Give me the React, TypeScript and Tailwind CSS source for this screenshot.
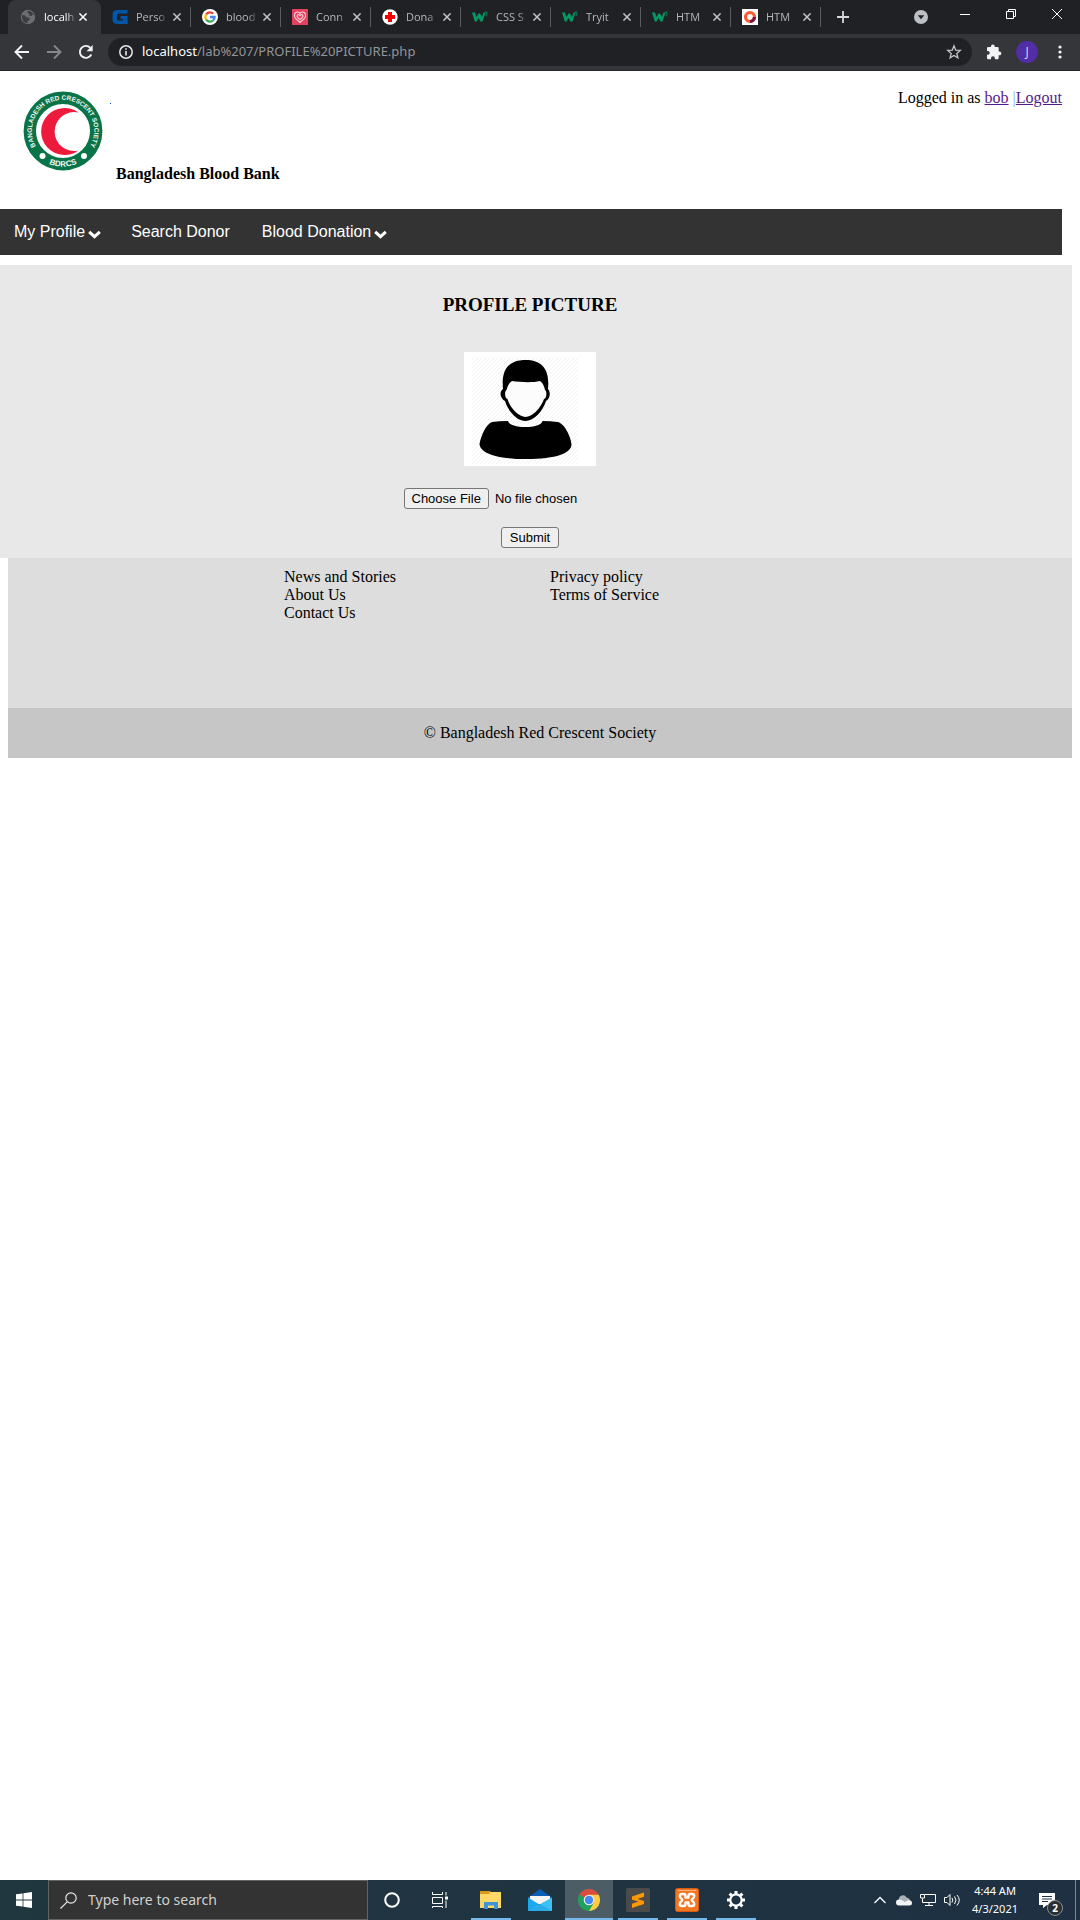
import React from "react";

type IconProps = { children: React.ReactNode; className?: string; box?: string };

function Icon({ children, className = "size-4", box = "0 0 16 16" }: IconProps) {
  return (
    <svg viewBox={box} className={`${className} shrink-0`} fill="none" aria-hidden="true">
      {children}
    </svg>
  );
}

const GlobeIcon = () => (
  <Icon>
    <circle cx="8" cy="8" r="7.2" fill="#6b6f74" />
    <path d="M2 6.200q2.500-.8 3.500.8t3 1.500q1.500 0 1.200 1.700T7.500 12v2.300A6.500 6.500 0 0 1 2 9z" fill="#3b3d41" />
    <path d="M7.500 2q-.5 1.500 1 2.200T9 6.500l2.500.5 1-1.500 1.500 1A6.500 6.500 0 0 0 7.500 2z" fill="#3b3d41" />
  </Icon>
);

const BlueGIcon = () => (
  <Icon>
    <path d="M15.500 1H5.500Q.5 1 .5 6v4q0 5 5 5h10V7H8.500v3H11v1.500H6.500Q5 11.500 5 10V6q0-1.500 1.500-1.500h9z" fill="#0057a8" />
  </Icon>
);

const GoogleIcon = () => (
  <Icon>
    <circle cx="8" cy="8" r="8" fill="#fff" />
    <g strokeWidth="2.300">
      <path d="M4.100 5.500A4.600 4.600 0 0 1 11.300 4.700" stroke="#ea4335" />
      <path d="M4.100 10.500a4.800 4.800 0 0 1 0-5" stroke="#fbbc05" />
      <path d="M11 11.500a4.600 4.600 0 0 1-6.900-1" stroke="#34a853" />
      <path d="M8 8h4.600A4.600 4.600 0 0 1 11 11.500" stroke="#4285f4" />
    </g>
  </Icon>
);

const HeartIcon = () => (
  <Icon>
    <path d="M0 0h16v16H0z" fill="#e4405f" />
    <path d="M8 13.500 3.500 9.300C1 6.500 3 2.800 5.700 3c1.300.1 1.900.8 2.300 1.400C8.400 3.800 9 3.100 10.300 3c2.700-.2 4.700 3.500 2.200 6.300zM8 10.700 5.600 8.300C4.300 6.900 5.700 5 7 5.700l1 1 1-1c1.300-.7 2.700 1.200 1.400 2.600z" stroke="#fbd5de" strokeWidth="1.100" />
  </Icon>
);

const CrossIcon = () => (
  <Icon>
    <circle cx="8" cy="8" r="7.700" fill="#fff" />
    <path d="M6 3h4v3h3v4h-3v3H6v-3H3V6h3z" fill="#f20000" />
  </Icon>
);

const W3Icon = () => (
  <Icon>
    <path d="M0 3.500h3l1.500 4.500 2-3.500h1.500l2 3.500 1.500-4.500h2L10.500 12.500H8.500l-2-3.500-2 3.500H2.800z" fill="#059862" />
    <path d="M13 3h2.200L14 4.700q1.500 0 1.300 1.300-.5 1-2 .7" stroke="#059862" strokeWidth=".8" />
  </Icon>
);

const RingIcon = () => (
  <Icon>
    <path d="M0 0h16v16H0z" fill="#fff" />
    <circle cx="8" cy="8" r="4.500" stroke="#ff5a30" strokeWidth="3.200" />
    <path d="M12.500 8A4.500 4.500 0 0 1 8 12.500" stroke="#7a1440" strokeWidth="3.200" />
  </Icon>
);

const CloseMark = () => (
  <Icon className="size-2" box="0 0 8 8">
    <path d="m.4.4 7.200 7.200m0-7.200L.4 7.600" stroke="currentColor" strokeWidth="1.500" />
  </Icon>
);

const tabs = [
  { title: "Perso", icon: <BlueGIcon /> },
  { title: "blood", icon: <GoogleIcon /> },
  { title: "Conn", icon: <HeartIcon /> },
  { title: "Dona", icon: <CrossIcon /> },
  { title: "CSS S", icon: <W3Icon /> },
  { title: "Tryit", icon: <W3Icon /> },
  { title: "HTM", icon: <W3Icon /> },
  { title: "HTM", icon: <RingIcon /> },
];

function Tab({ title, icon, active = false }: { title: string; icon: React.ReactNode; active?: boolean }) {
  return (
    <div
      className={
        active
          ? "flex h-full w-[93px] items-center rounded-t-lg bg-[#35363a] pr-3.5 pl-3 text-white"
          : "flex h-full w-[90px] items-center pl-[11px] text-[#b4b7bb]"
      }
    >
      {icon}
      <button className="ml-2 bg-transparent text-left text-[11px] whitespace-nowrap [mask-image:linear-gradient(to_right,black_22px,rgba(0,0,0,0.25)_30px)]">
        {title}
      </button>
      <div className="ml-auto flex items-center gap-[9px]">
        <button aria-label={`Close ${title}`} className={active ? "text-white" : "text-[#c3c5c8]"}>
          <CloseMark />
        </button>
        {!active && <span className="h-5 w-px bg-[#5a5c60]" />}
      </div>
    </div>
  );
}

function BrowserChrome() {
  return (
    <div className="border-b border-[#242427] bg-[#35363a] font-['Open_Sans','Noto_Sans',sans-serif]">
      <div className="flex h-[34px] bg-[#202124] pl-2">
        <Tab title="localh" icon={<GlobeIcon />} active />
        {tabs.map((t, i) => (
          <Tab key={i} title={t.title} icon={t.icon} />
        ))}
        <button aria-label="New tab" className="flex w-11 items-center justify-center text-[#d5d7da]">
          <Icon className="size-3" box="0 0 12 12">
            <path d="M6 0v12M0 6h12" stroke="currentColor" strokeWidth="1.800" />
          </Icon>
        </button>
        <button aria-label="Search tabs" className="ml-auto flex w-[42px] items-center justify-center">
          <Icon className="size-3.5" box="0 0 14 14">
            <circle cx="7" cy="7" r="7" fill="#bdc1c6" />
            <path d="M3.800 5.300h6.400L7 9.300z" fill="#202124" />
          </Icon>
        </button>
        <button aria-label="Minimize" className="flex h-7 w-[46px] items-center justify-center">
          <Icon className="size-2.5" box="0 0 10 10">
            <path d="M0 5.500h10" stroke="#fff" />
          </Icon>
        </button>
        <button aria-label="Restore" className="flex h-7 w-[46px] items-center justify-center">
          <Icon className="size-2.5" box="0 0 10 10">
            <path d="M.5 2.500h7v7h-7zM2.500 2.500v-2h7v7h-2" stroke="#fff" />
          </Icon>
        </button>
        <button aria-label="Close window" className="flex h-7 w-[46px] items-center justify-center">
          <Icon className="size-2.5" box="0 0 10 10">
            <path d="m0 0 10 10M10 0 0 10" stroke="#fff" />
          </Icon>
        </button>
      </div>
      <div className="flex h-9 items-center">
        <button aria-label="Back" className="ml-3.5 text-[#f1f3f4]">
          <Icon>
            <path d="M15 8H2M8 1.500 1.500 8 8 14.500" stroke="currentColor" strokeWidth="1.900" />
          </Icon>
        </button>
        <button aria-label="Forward" className="ml-4 text-[#85878a]">
          <Icon>
            <path d="M1 8h13M8 1.500 14.500 8 8 14.500" stroke="currentColor" strokeWidth="1.900" />
          </Icon>
        </button>
        <button aria-label="Reload" className="ml-4 text-[#f1f3f4]">
          <Icon>
            <path d="M13.300 10.500A6 6 0 1 1 12.300 3.800" stroke="currentColor" strokeWidth="1.900" />
            <path d="M14.700 1v6.200H8.500z" fill="currentColor" />
          </Icon>
        </button>
        <div className="ml-3.5 flex h-7 flex-1 items-center rounded-full bg-[#202124] pr-2.5 pl-[11px]">
          <Icon className="size-3.5" box="0 0 14 14">
            <circle cx="7" cy="7" r="6.200" stroke="#e8eaed" strokeWidth="1.500" />
            <path d="M7 6v4.500M7 3.200v1.500" stroke="#e8eaed" strokeWidth="1.600" />
          </Icon>
          <div className="ml-[9px] flex-1 font-['Noto_Sans',sans-serif] text-[13px] whitespace-nowrap text-[#92959a]">
            <span className="text-white">localhost</span>/lab%207/PROFILE%20PICTURE.php
          </div>
          <button aria-label="Bookmark" className="text-[#c4c7ca]">
            <Icon>
              <path d="m8 1.800 1.700 4.300 4.600.3-3.500 3 1.100 4.500L8 11.500l-3.900 2.400 1.100-4.500-3.500-3 4.600-.3z" stroke="currentColor" strokeWidth="1.300" />
            </Icon>
          </button>
        </div>
        <button aria-label="Extensions" className="ml-3.5 text-[#f1f3f4]">
          <Icon>
            <path d="M13.500 7.500h-.8V4.200q0-1.200-1.200-1.200H8.700v-.7a1.800 1.800 0 0 0-3.700 0V3H2.200Q1 3 1 4.200v2.700h.8a1.900 1.900 0 0 1 0 3.900H1V14q0 1.200 1.200 1.200H5v-.9a1.900 1.900 0 0 1 3.900 0v.9h2.600q1.200 0 1.200-1.200v-2.700h.8a1.900 1.900 0 0 0 0-3.800z" fill="currentColor" />
          </Icon>
        </button>
        <button aria-label="Account" className="ml-3.5 size-[22px] rounded-full bg-[#512da8] text-xs leading-[22px] text-[#e0d8f0]">
          J
        </button>
        <button aria-label="Menu" className="mr-3 ml-3.5">
          <Icon>
            <g fill="#f1f3f4">
              <circle cx="8" cy="3" r="1.600" />
              <circle cx="8" cy="8" r="1.600" />
              <circle cx="8" cy="13" r="1.600" />
            </g>
          </Icon>
        </button>
      </div>
    </div>
  );
}

function Emblem() {
  return (
    <svg viewBox="0 0 80 80" className="size-20" role="img" aria-label="Bangladesh Red Crescent Society">
      <defs>
        <path id="ring-top" d="M16.500 60.500A31.200 31.200 0 1 1 63.500 60.500" />
        <path id="ring-bottom" d="M20 69.500A35.600 35.600 0 0 0 60 69.500" />
      </defs>
      <circle cx="40" cy="40" r="33.200" fill="#fff" stroke="#0a7449" strokeWidth="12.400" />
      <path d="M55.500 21.500A23.500 23.500 0 1 0 55.500 59.500 19.500 19.500 0 1 1 55.500 21.500z" fill="#ed1a3b" />
      <circle cx="19.500" cy="65" r="3" fill="#fff" />
      <circle cx="61" cy="65" r="3" fill="#fff" />
      <g fill="#eef6f1" textAnchor="middle" fontFamily="'Liberation Sans Narrow','Liberation Sans',sans-serif" fontWeight="700">
        <text fontSize="6.500">
          <textPath href="#ring-top" startOffset="50%">BANGLADESH RED CRESCENT SOCIETY</textPath>
        </text>
        <text fontSize="8">
          <textPath href="#ring-bottom" startOffset="50%">BDRCS</textPath>
        </text>
      </g>
    </svg>
  );
}

const Chevron = () => (
  <Icon className="mt-1 ml-[3px] h-[9px] w-[13px]" box="0 0 13 9">
    <path d="m1.200 1.800 5.300 4.900 5.300-4.900" stroke="#fff" strokeWidth="3" />
  </Icon>
);

function SiteHeader() {
  return (
    <header className="flex h-[138px] items-start pt-5 pr-[18px] pl-[23px]">
      <Emblem />
      <a href="#home" aria-label="Home" className="mt-3 ml-[7px] size-px bg-blue-700" />
      <h1 className="mt-[74px] ml-[5px] text-base leading-[18px] font-bold">Bangladesh Blood Bank</h1>
      <p className="-mt-0.5 ml-auto leading-[18px]">
        Logged in as{" "}
        <a href="#bob" className="text-[#551a8b] underline">
          bob
        </a>{" "}
        <span className="text-[#7fb0dc]">|</span>
        <a href="#logout" className="text-[#551a8b] underline">
          Logout
        </a>
      </p>
    </header>
  );
}

function SiteNav() {
  return (
    <nav className="mr-[18px] flex h-[46px] items-center bg-[#333] pl-3.5 font-['Liberation_Sans',sans-serif] text-base text-white">
      <button className="flex items-center">
        My Profile
        <Chevron />
      </button>
      <a href="#search" className="ml-[30px]">
        Search Donor
      </a>
      <button className="ml-8 flex items-center">
        Blood Donation
        <Chevron />
      </button>
    </nav>
  );
}

function Avatar() {
  return (
    <svg viewBox="0 0 132 114" className="mt-9 h-[114px] w-[132px] bg-white" role="img" aria-label="Profile picture">
      <defs>
        <pattern id="hatch" width="4" height="4" patternUnits="userSpaceOnUse">
          <path d="M-1 5 5-1M-1 1 1-1M3 5 5 3" stroke="#f3f3f3" />
        </pattern>
      </defs>
      <path d="M8 5h107v107H8z" fill="url(#hatch)" />
      <path d="M39 37C37 17 45 8 61.500 8S86 17 84 37c3 3 2 10-2 12-3 10-12 20-20.500 20S44 59 41 49c-5-3-6-9-2-12z" />
      <path d="M42.500 38c-2 1-2 8 1 9C46 56 55 65 61.500 65S77 56 80 47c3-1 3-8 1-9-1-5-3-8-5-9-8 2-21 1-28 0-3 2-4.500 5-5.500 9z" fill="#fcfcfc" />
      <path d="M28 70q7-1 16-1c1 4 9 6 17.500 6s16-2 17-6q8 0 15 1c7 1 14 16 14 23-1 8-14 14-46 14S16 100 15.500 92C17 84 22 72 28 70z" />
    </svg>
  );
}

function ProfileForm() {
  return (
    <section className="mt-2.5 mr-2 h-[293px] bg-[#e8e8e8]">
      <form className="mr-3 flex flex-col items-center pt-[29px]" onSubmit={(e) => e.preventDefault()}>
        <h2 className="text-[19px] leading-[22px] font-bold">PROFILE PICTURE</h2>
        <Avatar />
        <input
          type="file"
          aria-label="Profile picture file"
          className="mt-[22px] w-[253px] font-['Liberation_Sans',sans-serif] text-[13px] leading-[15px] file:mr-1.5 file:h-[21px] file:rounded-[3px] file:border file:border-solid file:border-[#767676] file:bg-[#efefef] file:px-[7px]"
        />
        <button className="mt-[18px] h-[21px] rounded-[3px] border border-[#767676] bg-[#efefef] px-2 font-['Liberation_Sans',sans-serif] text-[13px] leading-[19px]">
          Submit
        </button>
      </form>
    </section>
  );
}

function SiteFooter() {
  return (
    <footer className="mr-2 ml-2">
      <div className="grid h-[150px] grid-cols-4 bg-[#ddd] pt-2.5 leading-[18px]">
        <ul className="col-start-2 pl-2.5">
          <li><a href="#news">News and Stories</a></li>
          <li><a href="#about">About Us</a></li>
          <li><a href="#contact">Contact Us</a></li>
        </ul>
        <ul className="pl-2.5">
          <li><a href="#privacy">Privacy policy</a></li>
          <li><a href="#terms">Terms of Service</a></li>
        </ul>
      </div>
      <p className="flex h-[50px] items-center justify-center bg-[#c6c6c6] leading-[18px]">© Bangladesh Red Crescent Society</p>
    </footer>
  );
}

const apps = [
  {
    name: "File Explorer",
    icon: (
      <>
        <path d="M1 3h9l2 1h10v16H1z" fill="#ffd968" />
        <path d="M1 3h9l1 3H1z" fill="#d99a1b" />
        <path d="M5 21v-7h14v7h-4v-3.500H9V21z" fill="#3f93d6" />
      </>
    ),
  },
  {
    name: "Mail",
    icon: (
      <>
        <path d="M0 9.500 12 1l12 8.500V12H0z" fill="#0a5eb5" />
        <path d="M2 8h20v8H2z" fill="#f4f4f4" />
        <path d="m0 9.500 13 8L0 23z" fill="#1ca8ed" />
        <path d="M24 9.500V23H0z" fill="#3cc1f3" />
        <path d="m13 16.500 11 6.500H0z" fill="#1590df" opacity=".45" />
      </>
    ),
  },
  {
    name: "Chrome",
    icon: (
      <>
        <circle cx="12" cy="12" r="11" fill="#1fa15d" />
        <path d="M12 12 2.500 6.500A11 11 0 0 1 21.500 6.500z" fill="#dc4b3e" />
        <path d="M12 6.800h9.700A11 11 0 0 1 12 23l5-8.500z" fill="#ffcd43" />
        <circle cx="12" cy="12" r="5.300" fill="#f1f1f1" />
        <circle cx="12" cy="12" r="4.200" fill="#4688f1" />
      </>
    ),
  },
  {
    name: "Sublime Text",
    icon: (
      <>
        <rect width="24" height="24" rx="1.500" fill="#4b4b4b" />
        <path d="m6 8.500 12-4v4.200l-6.500 2.200 6.500 2V16L6 20v-4.200l6.500-2.200L6 11.700z" fill="#ff9800" />
      </>
    ),
  },
  {
    name: "XAMPP",
    icon: (
      <>
        <rect x=".5" y=".5" width="23" height="23" rx="2" fill="#f37623" stroke="#d85a12" />
        <path d="M3 2.500h18" stroke="#f9b184" />
        <path
          d="M10.500 9.500V8q0-2-2-2H7Q4.800 6 4.800 8t2.200 3.200q.6.800 0 1.600Q4.800 14 4.800 16T7 18h1.500q2 0 2-2v-1.500h3V16q0 2 2 2H17q2.200 0 2.200-2T17 12.800q-.6-.8 0-1.600Q19.200 10 19.200 8T17 6h-1.500q-2 0-2 2v1.500z"
          stroke="#fff"
          strokeWidth="2.400"
          strokeLinejoin="round"
        />
      </>
    ),
  },
  {
    name: "Settings",
    icon: (
      <>
        <circle cx="12" cy="12" r="5.700" stroke="#fff" strokeWidth="2.200" />
        <path d="M12 6V3m0 18v-3m6-6h3M3 12h3m10.200-4.200 2.200-2.200M5.600 18.400l2.200-2.200m8.400 0 2.200 2.200M5.600 5.600l2.200 2.200" stroke="#fff" strokeWidth="3" />
      </>
    ),
  },
];

function Taskbar() {
  return (
    <div className="flex h-10 bg-linear-to-r from-[#20373f] to-[#1e3042] font-['Noto_Sans','Open_Sans',sans-serif] text-white">
      <button aria-label="Start" className="flex w-12 items-center justify-center">
        <Icon>
          <path d="M0 2.300 6.600 1.400v6.200H0zM7.400 1.300 16 0v7.600H7.400zM0 8.400h6.600v6.200L0 13.700zM7.400 8.400H16V16l-8.600-1.300z" fill="#fff" />
        </Icon>
      </button>
      <label className="flex w-80 items-center border border-[#646464] bg-[#333] pl-[11px]">
        <Icon className="size-[17px]" box="0 0 17 17">
          <circle cx="11" cy="6" r="5.200" stroke="#e8e8e8" strokeWidth="1.200" />
          <path d="M7.200 9.800.5 16.500" stroke="#e8e8e8" strokeWidth="1.200" />
        </Icon>
        <input aria-label="Search" placeholder="Type here to search" className="ml-[11px] w-full bg-transparent text-sm outline-none placeholder:text-[#d0d0d0]" />
      </label>
      <button aria-label="Cortana" className="flex w-12 items-center justify-center">
        <Icon>
          <circle cx="8" cy="8" r="6.800" stroke="#fff" strokeWidth="2" />
        </Icon>
      </button>
      <button aria-label="Task View" className="flex w-12 items-center justify-center">
        <Icon>
          <path d="M.5 0v2.500h10V0M.5 5.500h10v6H.5zM.5 16v-1.500h10V16M14 0v3.500M14 8.500V16" stroke="#fff" />
          <path d="M13 4.500h3v3h-3z" fill="#fff" />
        </Icon>
      </button>
      <div className="flex gap-px pl-[3px]">
        {apps.map((app) => (
          <button
            key={app.name}
            aria-label={app.name}
            className={app.name === "Chrome" ? "flex w-12 flex-col items-center bg-[#4d5d66]" : "flex w-12 flex-col items-center"}
          >
            <Icon className="mt-2 size-6" box="0 0 24 24">
              {app.icon}
            </Icon>
            {app.name !== "Mail" && (
              <span className={app.name === "Chrome" ? "mt-auto h-0.5 w-full bg-[#76b9ed]" : "mt-auto h-0.5 w-10 bg-[#76b9ed]"} />
            )}
          </button>
        ))}
      </div>
      <div className="ml-auto flex items-center">
        <button aria-label="Hidden icons">
          <Icon className="h-4 w-3" box="0 0 12 16">
            <path d="m.5 11 5.500-5.500L11.500 11" stroke="#fff" strokeWidth="1.300" />
          </Icon>
        </button>
        <button aria-label="OneDrive" className="ml-2.5">
          <Icon>
            <path d="M3 8a4 4 0 0 1 7.500-2.500A4 4 0 0 1 14 8l-4 2z" fill="#a9b1b6" />
            <path d="M3 13.500a3 3 0 0 1 0-6q1.500-.3 3 .7l3 1.500L12.500 8q3.500.3 3.500 3t-3 2.500z" fill="#f4f4f4" />
          </Icon>
        </button>
        <button aria-label="Network" className="ml-2">
          <Icon>
            <path d="M5 2.500h10.500v8H2.500V6.500M.5 2.500h4v3.500h-4zM9 10.500v3M5 13.500h8" stroke="#fff" />
          </Icon>
        </button>
        <button aria-label="Volume" className="ml-2">
          <Icon>
            <path d="M.5 5.500h2.500l3-3v11l-3-3H.5zM8 6q1.500 2 0 4.500M10.500 4.500q3 3.500 0 7.500M13 3q4.500 5 0 10.500" stroke="#fff" />
          </Icon>
        </button>
        <div className="ml-3 text-center text-[11px] leading-[18px]">
          4:44 AM
          <br />
          4/3/2021
        </div>
        <button aria-label="Notifications" className="relative ml-[21px] flex">
          <Icon>
            <path d="M0 1h16v12H8l-4 3v-3H0z" fill="#fff" />
            <path d="M3 4.500h10M3 7h10M3 9.500h6" stroke="#1e3042" />
          </Icon>
          <span className="absolute top-2 left-2 flex size-4 items-center justify-center rounded-full border border-[#8a8f92] bg-[#2b2e30] text-[10px] leading-none font-bold">2</span>
        </button>
        <span className="ml-5 h-10 w-px bg-[#7d888f]" />
        <span className="w-1" />
      </div>
    </div>
  );
}

export default function App() {
  return (
    <div className="flex min-h-screen flex-col bg-white font-['Liberation_Serif',serif] text-base text-black">
      <BrowserChrome />
      <main className="flex-1">
        <SiteHeader />
        <SiteNav />
        <ProfileForm />
        <SiteFooter />
      </main>
      <Taskbar />
    </div>
  );
}
